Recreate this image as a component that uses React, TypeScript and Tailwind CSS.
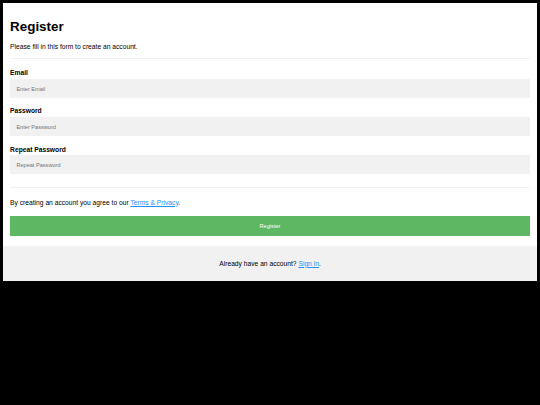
import React from 'react';

const font = "font-['Arial','Liberation_Sans',sans-serif]";

const fields = [
  { id: 'email', label: 'Email', placeholder: 'Enter Email', type: 'text' },
  { id: 'psw', label: 'Password', placeholder: 'Enter Password', type: 'password' },
  { id: 'psw-repeat', label: 'Repeat Password', placeholder: 'Repeat Password', type: 'password' },
];

const App: React.FC = () => {
  return (
    <div className={`min-h-[405px] w-full bg-black p-[3.4px] text-black ${font}`}>
      <form className="bg-white" onSubmit={(e) => e.preventDefault()}>
        <div className="px-[6.7px] pt-[6.7px] pb-[6.7px]">
          <h1 className="my-[9px] text-[13.4px] font-bold leading-[15.4px]">Register</h1>
          <p className="mb-[6.7px] text-[6.7px] leading-[7.7px]">Please fill in this form to create an account.</p>
          <hr className="border-t border-[#f1f1f1]" />

          <div className="mt-[10.5px]">
            {fields.map((f) => (
              <div key={f.id}>
                <label htmlFor={f.id} className="block text-[6.7px] font-bold leading-[7.7px]">
                  {f.label}
                </label>
                <input
                  id={f.id}
                  name={f.id}
                  type={f.type}
                  placeholder={f.placeholder}
                  className="mt-[2.1px] mb-[9.2px] block h-[19.1px] w-full bg-[#f1f1f1] px-[6.3px] text-[5.6px] outline-none placeholder:text-[#757575]"
                />
              </div>
            ))}
          </div>

          {/* margins collapse with the input's bottom margin */}
          <hr className="mt-[12.6px] border-t border-[#f1f1f1]" />
          <p className="mt-[10.5px] mb-[6.7px] text-[6.7px] leading-[7.7px]">
            By creating an account you agree to our{' '}
            <a href="#" className="text-[#1e90ff] underline">Terms &amp; Privacy</a>.
          </p>

          <button
            type="submit"
            className="mt-[10.1px] mb-[3.4px] block h-[19.9px] w-full bg-[#5eb762] text-[5.6px] text-white"
          >
            Register
          </button>
        </div>

        <div className="bg-[#f1f1f1] p-[6.7px] text-center">
          <p className="my-[6.7px] text-[6.7px] leading-[7.7px]">
            Already have an account? <a href="#" className="text-[#1e90ff] underline">Sign in</a>.
          </p>
        </div>
      </form>
    </div>
  );
};

export default App;
